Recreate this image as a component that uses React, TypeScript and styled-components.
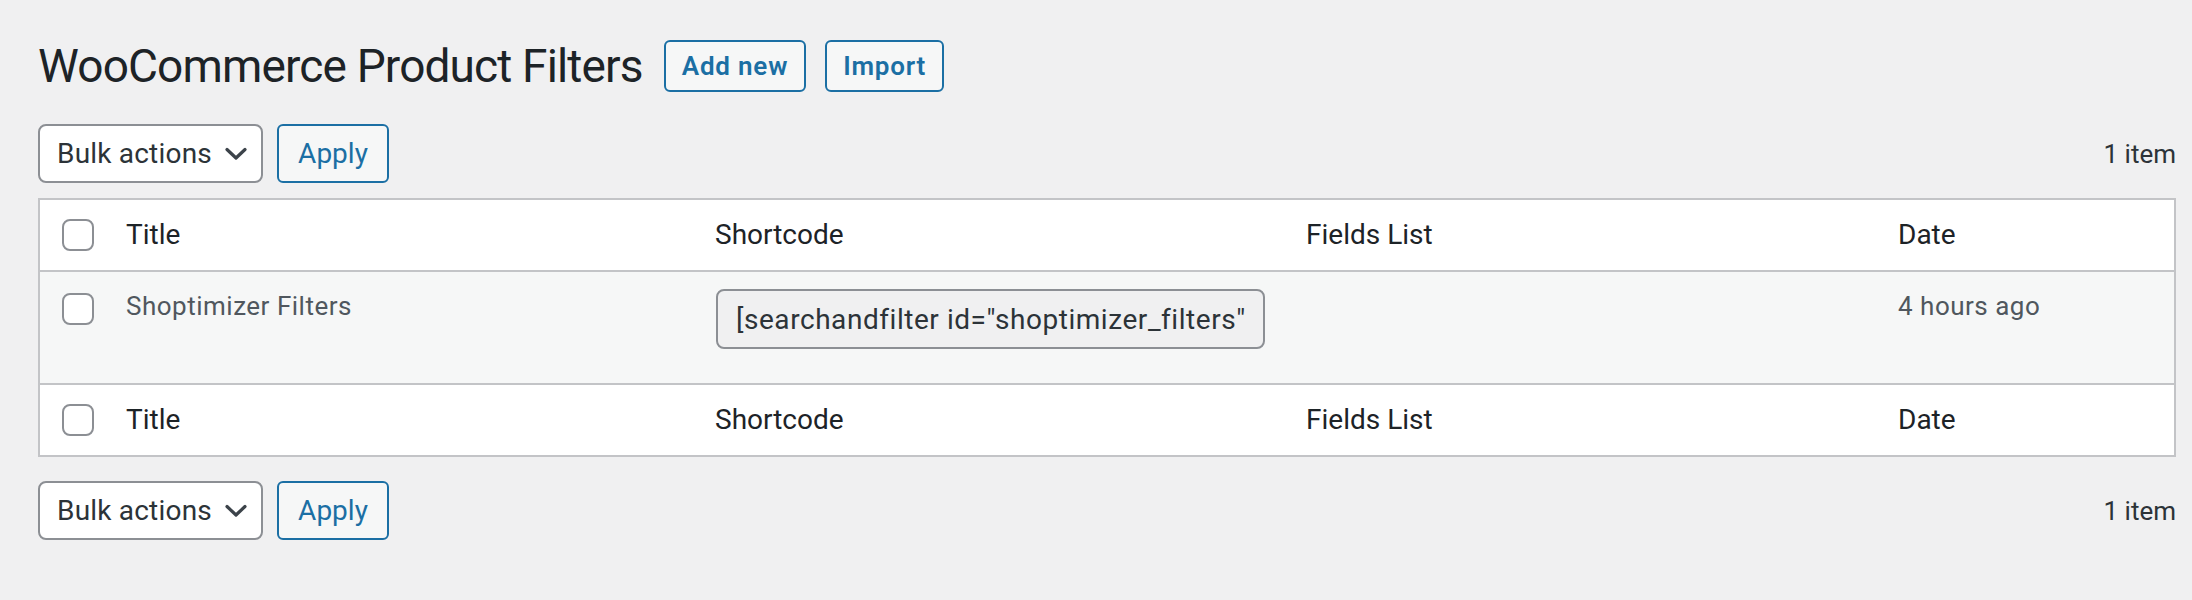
import React from 'react';
import styled, { createGlobalStyle } from 'styled-components';

const GlobalStyle = createGlobalStyle`
  html, body {
    margin: 0;
    padding: 0;
    background: #f0f0f1;
    font-family: "Roboto", "Liberation Sans", sans-serif;
    color: #1d2327;
  }
`;

const Wrap = styled.div`
  padding: 40px 16px 40px 38px;
`;

const HeaderRow = styled.div`
  display: flex;
  align-items: center;
  height: 52px;
`;

const PageTitle = styled.h1`
  margin: 0 21px 0 0;
  font-size: 46px;
  font-weight: 400;
  line-height: 52px;
  letter-spacing: -0.85px;
  color: #1d2327;
`;

const TitleAction = styled.button`
  height: 52px;
  padding: 0 16px;
  margin-right: 19px;
  border: 2px solid #1b6fa4;
  border-radius: 6px;
  background: #f6f7f7;
  color: #1b6fa4;
  font-family: inherit;
  font-size: 26px;
  font-weight: 600;
  letter-spacing: 0.8px;
  cursor: pointer;
`;

const Tablenav = styled.div<{ $top?: boolean }>`
  display: flex;
  align-items: center;
  gap: 14px;
  height: 59px;
  margin: ${(p) => (p.$top ? '32px 0 15px' : '24px 0 0')};
`;

const Select = styled.div`
  box-sizing: border-box;
  display: flex;
  align-items: center;
  justify-content: space-between;
  width: 225px;
  height: 59px;
  padding: 0 14px 0 17px;
  border: 2px solid #8c8f94;
  border-radius: 8px;
  background: #fff;
  font-size: 28px;
  letter-spacing: 0.2px;
  color: #2c3338;
`;

const Apply = styled.button`
  box-sizing: border-box;
  width: 112px;
  height: 59px;
  border: 2px solid #1b6fa4;
  border-radius: 6px;
  background: #f6f7f7;
  color: #1b6fa4;
  font-family: inherit;
  font-size: 28px;
  cursor: pointer;
`;

const Count = styled.span`
  margin-left: auto;
  font-size: 26px;
  color: #2c3338;
`;

const Table = styled.div`
  border: 2px solid #c3c4c7;
  background: #fff;
`;

const Row = styled.div<{ $body?: boolean }>`
  display: grid;
  grid-template-columns: 66px 589px 591px 592px 1fr;
  align-items: ${(p) => (p.$body ? 'start' : 'center')};
  height: ${(p) => (p.$body ? '111px' : '70px')};
  background: ${(p) => (p.$body ? '#f6f7f7' : '#fff')};
  & + & {
    border-top: 2px solid #c3c4c7;
  }
`;

const CheckCell = styled.div<{ $body?: boolean }>`
  padding: ${(p) => (p.$body ? '21px 0 0 22px' : '0 0 0 22px')};
  display: flex;
`;

const Cell = styled.div<{ $body?: boolean }>`
  padding: ${(p) => (p.$body ? '16px 20px 0' : '0 20px')};
  font-size: ${(p) => (p.$body ? '26px' : '28px')};
  letter-spacing: ${(p) => (p.$body ? '0.5px' : '0')};
  line-height: 36px;
  color: ${(p) => (p.$body ? '#50575e' : '#1d2327')};
  white-space: nowrap;
`;

const ShortcodeCell = styled.div`
  padding: 17px 20px 0 21px;
`;

const Checkbox = styled.span`
  box-sizing: border-box;
  width: 32px;
  height: 32px;
  border: 2px solid #8c8f94;
  border-radius: 8px;
  background: #fff;
`;

const ShortcodeInput = styled.input`
  box-sizing: border-box;
  width: 549px;
  height: 60px;
  padding: 0 18px;
  border: 2px solid #8c8f94;
  border-radius: 8px;
  background: #f0f0f1;
  font-family: inherit;
  font-size: 28px;
  letter-spacing: 0.55px;
  color: #2c3338;
  outline: none;
`;

const Chevron = () => (
  <svg width="22" height="14" viewBox="0 0 22 14" fill="none">
    <path d="M2 2.5 L11 11 L20 2.5" stroke="#3c434a" strokeWidth="3.2" strokeLinecap="round" strokeLinejoin="round" />
  </svg>
);

const columns = ['Title', 'Shortcode', 'Fields List', 'Date'];

const HeadRow: React.FC = () => (
  <Row>
    <CheckCell>
      <Checkbox />
    </CheckCell>
    {columns.map((c) => (
      <Cell key={c}>{c}</Cell>
    ))}
  </Row>
);

const BulkBar: React.FC<{ top?: boolean }> = ({ top }) => (
  <Tablenav $top={top}>
    <Select>
      Bulk actions
      <Chevron />
    </Select>
    <Apply>Apply</Apply>
    <Count>1 item</Count>
  </Tablenav>
);

const App: React.FC = () => {
  return (
    <>
      <GlobalStyle />
      <Wrap>
        <HeaderRow>
          <PageTitle>WooCommerce Product Filters</PageTitle>
          <TitleAction>Add new</TitleAction>
          <TitleAction>Import</TitleAction>
        </HeaderRow>

        <BulkBar top />

        <Table>
          <HeadRow />
          <Row $body>
            <CheckCell $body>
              <Checkbox />
            </CheckCell>
            <Cell $body>Shoptimizer Filters</Cell>
            <ShortcodeCell>
              <ShortcodeInput readOnly value={'[searchandfilter id="shoptimizer_filters"]'} />
            </ShortcodeCell>
            <Cell $body />
            <Cell $body>4 hours ago</Cell>
          </Row>
          <HeadRow />
        </Table>

        <BulkBar />
      </Wrap>
    </>
  );
};

export default App;
